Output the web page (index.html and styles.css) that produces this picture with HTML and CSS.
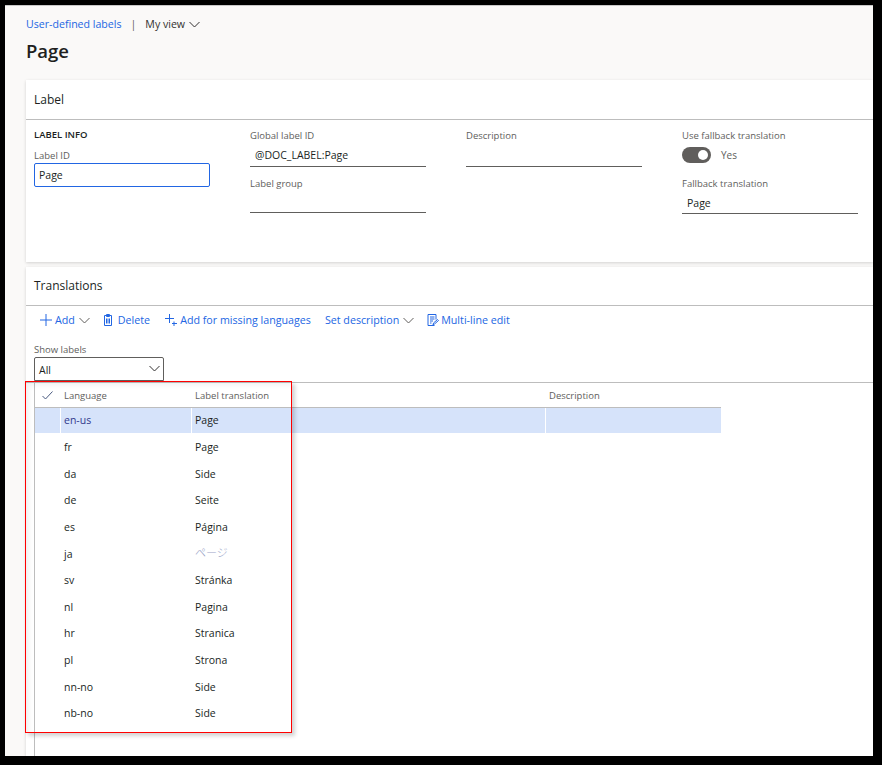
FILE: index.html
```html
<!DOCTYPE html>
<html lang="en">
<head>
<meta charset="utf-8">
<title>Page</title>
<link rel="stylesheet" href="styles.css">
</head>
<body>
<div class="frame">
  <header class="page-head">
    <nav class="crumbs">
      <a class="crumb-link">User-defined labels</a>
      <span class="crumb-sep">|</span>
      <span class="crumb-view">My view</span>
      <svg class="chev crumb-chev" viewBox="0 0 11 7"><path d="M.5 1l5 5 5-5"/></svg>
    </nav>
    <h1 class="title">Page</h1>
  </header>

  <section class="card card-label">
    <h2 class="card-title">Label</h2>
    <div class="fields">
      <div class="col">
        <div class="group-title">LABEL INFO</div>
        <label class="lbl lbl-id">Label ID</label>
        <div class="input-focus">Page</div>
      </div>
      <div class="col">
        <label class="lbl">Global label ID</label>
        <div class="input-line input-pad">@DOC_LABEL:Page</div>
        <label class="lbl lbl-next">Label group</label>
        <div class="input-line input-short"></div>
      </div>
      <div class="col">
        <label class="lbl">Description</label>
        <div class="input-line"></div>
      </div>
      <div class="col">
        <label class="lbl">Use fallback translation</label>
        <div class="toggle-row">
          <span class="toggle"><span class="knob"></span></span>
          <span class="toggle-text">Yes</span>
        </div>
        <label class="lbl lbl-fallback">Fallback translation</label>
        <div class="input-line input-pad input-fallback">Page</div>
      </div>
    </div>
  </section>

  <section class="card card-trans">
    <h2 class="card-title">Translations</h2>
    <div class="toolbar">
      <button class="tool tool-add">
        <svg class="ico ico-plus" viewBox="0 0 12 12"><path d="M6 0v12M0 6h12"/></svg>Add
        <svg class="chev tool-chev" viewBox="0 0 11 7"><path d="M.5 1l5 5 5-5"/></svg>
      </button>
      <button class="tool tool-del">
        <svg class="ico ico-del" viewBox="0 0 10 12"><path d="M1.500 1.500h7v10h-7zM3.500 .5h3v2h-3zM3.500 4.500v5M5 4.500v5M6.500 4.500v5"/></svg>Delete
      </button>
      <button class="tool tool-miss">
        <svg class="ico ico-miss" viewBox="0 0 12 12"><path d="M4.500 0v9M0 4.500h9M9 7.500v4.500M7 9.500h5"/></svg>Add for missing languages
      </button>
      <button class="tool tool-set">Set description
        <svg class="chev tool-chev" viewBox="0 0 11 7"><path d="M.5 1l5 5 5-5"/></svg>
      </button>
      <button class="tool tool-multi">
        <svg class="ico ico-multi" viewBox="0 0 12 12"><path d="M7.500 11.500H1V.5h8v5M3 3h4.500M3 5h4.500M3 7h3M3 9h1.500M6 11l.5-2 4-3.500 1 1-4 3.500z"/></svg>Multi-line edit
      </button>
    </div>
    <div class="filter">
      <label class="lbl">Show labels</label>
      <div class="combo">
        <span>All</span>
        <svg class="chev combo-chev" viewBox="0 0 11 7"><path d="M.5 1l5 5 5-5"/></svg>
      </div>
    </div>
    <div class="grid-wrap">
      <div class="grid">
        <div class="row row-head">
          <div class="cell cell-check"><svg class="check" viewBox="0 0 11 9"><path d="M.5 5l3 3 7-7.500"/></svg></div>
          <div class="cell cell-lang">Language</div>
          <div class="cell cell-text">Label translation</div>
          <div class="cell cell-desc">Description</div>
        </div>
        <div class="row row-sel">
          <div class="cell cell-check"></div>
          <div class="cell cell-lang cell-lang-sel">en-us</div>
          <div class="cell cell-text">Page</div>
          <div class="cell cell-desc"></div>
        </div>
        <div class="row"><div class="cell cell-check"></div><div class="cell cell-lang">fr</div><div class="cell cell-text">Page</div></div>
        <div class="row"><div class="cell cell-check"></div><div class="cell cell-lang">da</div><div class="cell cell-text">Side</div></div>
        <div class="row"><div class="cell cell-check"></div><div class="cell cell-lang">de</div><div class="cell cell-text">Seite</div></div>
        <div class="row"><div class="cell cell-check"></div><div class="cell cell-lang">es</div><div class="cell cell-text">Página</div></div>
        <div class="row"><div class="cell cell-check"></div><div class="cell cell-lang">ja</div><div class="cell cell-text cell-ja" lang="ja">ページ</div></div>
        <div class="row"><div class="cell cell-check"></div><div class="cell cell-lang">sv</div><div class="cell cell-text">Stránka</div></div>
        <div class="row"><div class="cell cell-check"></div><div class="cell cell-lang">nl</div><div class="cell cell-text">Pagina</div></div>
        <div class="row"><div class="cell cell-check"></div><div class="cell cell-lang">hr</div><div class="cell cell-text">Stranica</div></div>
        <div class="row"><div class="cell cell-check"></div><div class="cell cell-lang">pl</div><div class="cell cell-text">Strona</div></div>
        <div class="row"><div class="cell cell-check"></div><div class="cell cell-lang">nn-no</div><div class="cell cell-text">Side</div></div>
        <div class="row"><div class="cell cell-check"></div><div class="cell cell-lang">nb-no</div><div class="cell cell-text">Side</div></div>
      </div>
      <div class="highlight"></div>
    </div>
  </section>
</div>
</body>
</html>
```
FILE: styles.css
```css
* { box-sizing: border-box; }
html, body { margin: 0; padding: 0; height: 100%; background: #000; }
body {
  font-family: "Open Sans", "Noto Sans", "Liberation Sans", sans-serif;
  font-size: 11px;
  color: #201f1e;
  padding: 5px 9px 9px 5px;
  overflow: hidden;
}
.frame {
  height: 751px;
  background: #faf9f8;
  border-top: 1px solid #c8c8c8;
  overflow: hidden;
  display: flex;
  flex-direction: column;
  padding-left: 21px;
}
.page-head { height: 74px; padding-top: 9px; }
.crumbs { display: flex; align-items: center; height: 18px; font-size: 10.6px; }
.crumb-link { color: #2266e3; }
.crumb-sep { margin: 0 9px; color: #605e5c; }
.crumb-view { color: #323130; }
.chev { fill: none; stroke: #323130; stroke-width: 1; }
.crumb-chev { width: 11px; height: 7px; margin-left: 4px; }
.title { margin: 6px 0 0; font-size: 18.5px; line-height: 24px; font-weight: 600; color: #201f1e; }
.card { background: #fff; box-shadow: 0 1px 3px rgba(0,0,0,.16); }
.card-label { height: 182px; flex: none; }
.card-trans { margin-top: 5px; flex: 1; min-height: 0; }
.card-title {
  margin: 0;
  height: 40px;
  padding: 0 8px;
  display: flex;
  align-items: center;
  border-bottom: 1px solid #bdbdbd;
  font-size: 12px;
  font-weight: 500;
  color: #201f1e;
}
.card-trans .card-title { height: 39px; padding-bottom: 2px; }
.fields {
  display: grid;
  grid-template-columns: repeat(4, 176px);
  column-gap: 40px;
  padding: 8px 0 0 8px;
}
.col { display: flex; flex-direction: column; }
.lbl { display: block; height: 15px; line-height: 15px; font-size: 9.5px; font-weight: 500; color: #605e5c; }
.group-title { height: 14px; line-height: 14px; font-size: 9.5px; font-weight: 600; color: #201f1e; }
.lbl-id { margin-top: 7px; height: 14px; line-height: 14px; }
.input-focus {
  width: 176px;
  height: 24px;
  border: 1px solid #2266e3;
  border-radius: 2px;
  line-height: 22px;
  padding-left: 4px;
  font-size: 10.5px;
}
.input-line {
  height: 24px;
  line-height: 22px;
  padding-left: 5px;
  border-bottom: 1px solid #605e5c;
  font-size: 10.5px;
}
.input-pad { padding-top: 1px; }
.input-short { height: 22px; }
.input-fallback { height: 23px; }
.lbl-next { margin-top: 9px; }
.toggle-row { display: flex; align-items: center; height: 20px; margin-top: 2px; }
.toggle { width: 29px; height: 16px; border-radius: 8px; background: #605e5c; display: flex; justify-content: flex-end; align-items: center; padding-right: 3px; }
.knob { width: 10px; height: 10px; border-radius: 50%; background: #fff; }
.toggle-text { margin-left: 10px; color: #605e5c; font-size: 10px; }
.lbl-fallback { margin-top: 11px; }
.toolbar { height: 30px; display: flex; align-items: center; padding: 0 0 2px 14px; }
.tool {
  all: unset;
  display: flex;
  align-items: center;
  color: #2266e3;
  font-size: 10.7px;
  white-space: nowrap;
}
.ico { fill: none; stroke: #2266e3; stroke-width: 1; flex: none; }
.ico-plus { width: 12px; height: 12px; margin-right: 3px; }
.ico-del { width: 10px; height: 12px; margin-right: 5px; }
.ico-miss { width: 12px; height: 12px; margin-right: 3px; }
.ico-multi { width: 12px; height: 12px; margin-right: 2px; }
.tool-chev { width: 11px; height: 7px; margin-left: 4px; stroke: #605e5c; }
.tool-add { margin-right: 13px; }
.tool-del { margin-right: 15px; }
.tool-miss { margin-right: 14px; }
.tool-set { margin-right: 13px; }
.filter { padding: 6px 0 0 8px; height: 46px; }
.combo {
  width: 130px;
  height: 24px;
  border: 1px solid #605e5c;
  border-radius: 2px 2px 0 0;
  display: flex;
  align-items: center;
  justify-content: space-between;
  padding: 1px 3px 0 4px;
  font-size: 10.5px;
}
.combo-chev { width: 11px; height: 7px; margin-top: -2px; }
.grid-wrap { position: relative; height: 375px; border-top: 1px solid #bdbdbd; padding-left: 8px; }
.grid { height: 100%; border-left: 1px solid #bdbdbd; width: 687px; }
.row { display: flex; height: 26.64px; align-items: center; }
.cell { height: 100%; display: flex; align-items: center; font-size: 10.5px; flex: none; }
.cell-check { width: 25px; justify-content: center; }
.cell-lang { width: 131px; padding-left: 4px; }
.cell-text { width: 354px; padding-left: 4px; }
.cell-desc { width: 177px; padding-left: 4px; }
.row-head { height: 25px; border-bottom: 1px solid #bdbdbd; }
.row-head .cell { color: #605e5c; font-weight: 500; font-size: 9.5px; padding-top: 1px; }
.row-sel { height: 25px; margin-bottom: .7px; background: #d6e3fa; }
.row-sel .cell { padding-bottom: 1px; }
.row-sel .cell + .cell { border-left: 1px solid #fff; padding-left: 3px; }
.cell-lang-sel { color: #323a8c; }
.check { width: 11px; height: 9px; fill: none; stroke: #4a5a80; stroke-width: 1; }
.cell-ja { font-family: "Noto Sans CJK JP", "Open Sans", sans-serif; font-weight: 300; font-size: 11px; color: #9aa5c8; padding-bottom: 3px; }
.highlight {
  position: absolute;
  left: -1px;
  top: -2px;
  width: 267px;
  height: 352px;
  border: 1px solid #f00;
  pointer-events: none;
  box-shadow: 3px 3px 4px rgba(0,0,0,.18), inset 6px 6px 6px -4px rgba(0,0,0,.08);
}
```
